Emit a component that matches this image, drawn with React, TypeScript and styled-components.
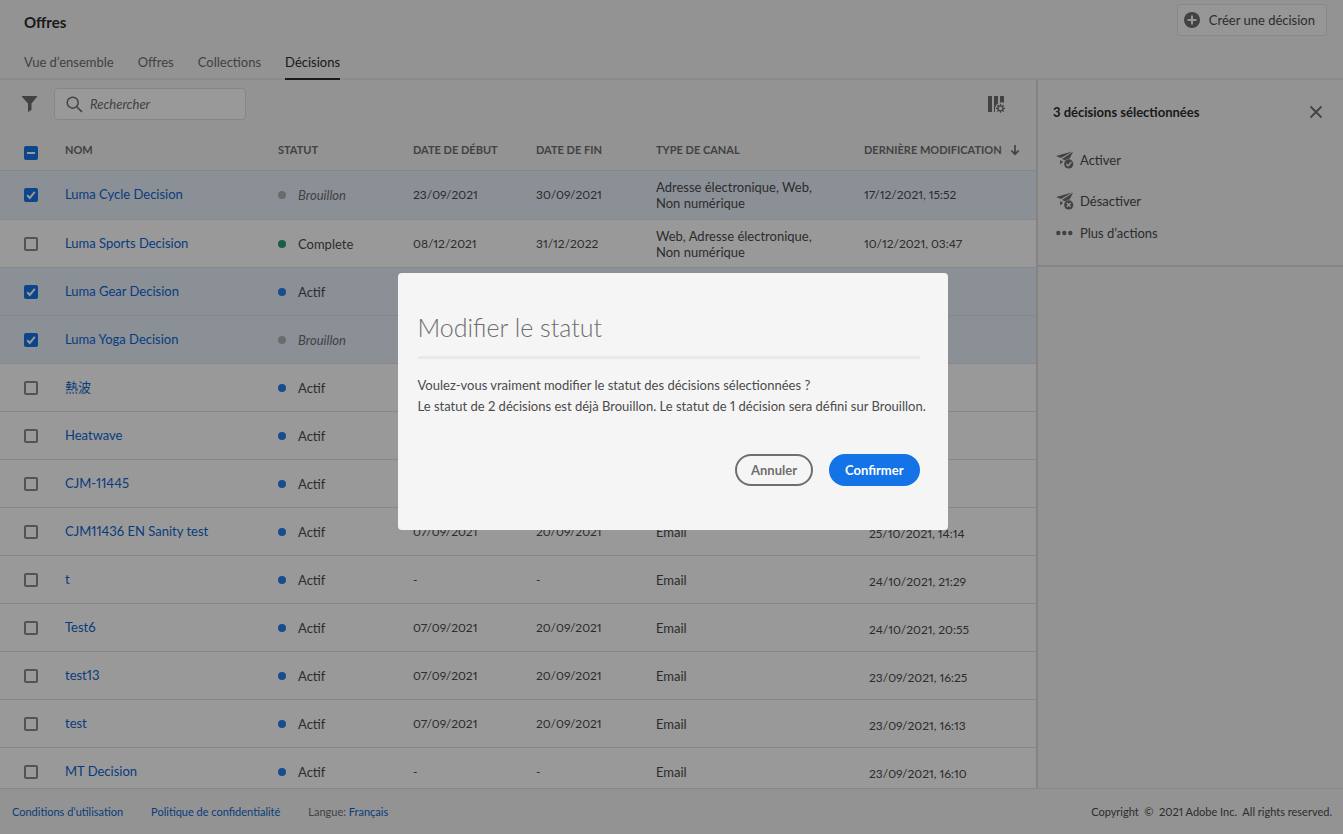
import React, { useEffect, useRef } from 'react';
import styled, { createGlobalStyle, css } from 'styled-components';

const GlobalStyle = createGlobalStyle`
  *, *::before, *::after { box-sizing: border-box; }
  body {
    margin: 0;
    font-family: Lato, 'Noto Sans CJK TC', sans-serif;
    font-size: 13px;
    font-variant-numeric: proportional-nums;
    line-height: 16px;
    color: #4b4b4b;
    background: #f5f5f5;
  }
  button, input { font: inherit; color: inherit; }
`;

const Page = styled.div`
  display: flex;
  flex-direction: column;
  height: 100vh;
  overflow: hidden;
`;

const Header = styled.header`
  display: flex;
  justify-content: space-between;
  align-items: stretch;
  flex: none;
  height: 80px;
  padding: 4px 16px 0 24px;
  border-bottom: 2px solid #eaeaea;
`;

const HeaderLeft = styled.div`
  display: flex;
  flex-direction: column;
  justify-content: space-between;
`;

const PageTitle = styled.h1`
  margin: 0;
  padding-top: 10px;
  font-size: 15px;
  font-weight: 700;
  color: #2c2c2c;
`;

const Tabs = styled.nav`
  display: flex;
  gap: 24px;
  margin-bottom: -2px;
`;

const Tab = styled.a<{ $active?: boolean }>`
  height: 26px;
  text-decoration: none;
  color: ${(p) => (p.$active ? '#2c2c2c' : '#6e6e6e')};
  border-bottom: 2px solid ${(p) => (p.$active ? '#2c2c2c' : 'transparent')};
`;

const CreateButton = styled.button`
  display: flex;
  align-items: center;
  gap: 9px;
  height: 32px;
  padding: 0 11px 0 6px;
  border: 1px solid #e1e1e1;
  border-radius: 4px;
  background: #fafafa;
`;

const Body = styled.div`
  display: flex;
  flex: 1;
  min-height: 0;
`;

const Main = styled.main`
  flex: 1;
  min-width: 0;
  overflow: hidden;
`;

const Toolbar = styled.div`
  display: flex;
  align-items: center;
  justify-content: space-between;
  height: 48px;
  padding: 0 31px 0 21px;
`;

const ToolGroup = styled.div`
  display: flex;
  align-items: center;
  gap: 16px;
`;

const IconButton = styled.button`
  display: flex;
  padding: 0;
  border: 0;
  background: none;
`;

const SearchBox = styled.label`
  display: flex;
  align-items: center;
  gap: 7px;
  width: 192px;
  height: 32px;
  padding: 0 11px;
  border: 1px solid #e1e1e1;
  border-radius: 4px;
  background: #fff;
`;

const SearchInput = styled.input`
  min-width: 0;
  flex: 1;
  padding: 0;
  border: 0;
  outline: 0;
  background: none;
  &::placeholder {
    color: #6e6e6e;
    font-style: italic;
    opacity: 1;
  }
`;

const Table = styled.table`
  width: 100%;
  table-layout: fixed;
  border-collapse: separate;
  border-spacing: 0;
`;

const Col = styled.col<{ $w?: number }>`
  ${(p) => p.$w && css`width: ${p.$w}px;`}
`;

const HeadCell = styled.th`
  height: 43px;
  padding: 2px 0 0;
  border-bottom: 1px solid #e1e1e1;
  text-align: left;
  font-size: 11px;
  font-weight: 700;
  color: #6e6e6e;
  white-space: nowrap;
  &:first-child { padding: 8px 0 0 24px; }
`;

const SortLabel = styled.span`
  display: flex;
  align-items: center;
  gap: 8px;
`;

const Row = styled.tr<{ $selected?: boolean }>`
  background: ${(p) => (p.$selected ? '#e8f0fc' : '#fff')};
`;

const Cell = styled.td`
  height: 48px;
  padding: 0;
  border-bottom: 1px solid #e1e1e1;
  white-space: pre-line;
  &:first-child { padding-left: 24px; }
  tr:first-child > & { height: 49px; }
`;

const NameCell = styled(Cell)`
  padding-bottom: 2px;
`;

const DateCell = styled(Cell)<{ $inset?: boolean }>`
  padding: ${(p) => (p.$inset ? '4px 0 0 5px' : '0')};
  font-size: 12px;
`;

const CheckBox = styled.input`
  appearance: none;
  display: block;
  width: 14px;
  height: 14px;
  margin: 0;
  border: 2px solid #8a8a8a;
  border-radius: 2px;
  background: #fff;
  &:checked, &:indeterminate {
    border: 0;
    background: #1473e6 center / 14px 14px no-repeat;
  }
  &:checked {
    background-image: url("data:image/svg+xml,%3Csvg xmlns='http://www.w3.org/2000/svg' viewBox='0 0 14 14'%3E%3Cpath d='M3.2 7.2l2.6 2.7 5-6' fill='none' stroke='white' stroke-width='2'/%3E%3C/svg%3E");
  }
  &:indeterminate {
    background-image: url("data:image/svg+xml,%3Csvg xmlns='http://www.w3.org/2000/svg' viewBox='0 0 14 14'%3E%3Cpath d='M3 7h8' stroke='white' stroke-width='2'/%3E%3C/svg%3E");
  }
`;

const NameLink = styled.a`
  color: #0d66d0;
  text-decoration: none;
`;

const Status = styled.span<{ $draft?: boolean }>`
  display: flex;
  align-items: center;
  gap: 12px;
  ${(p) => p.$draft && css`font-style: italic; color: #6e6e6e;`}
`;

const Dot = styled.span<{ $color: string }>`
  width: 8px;
  height: 8px;
  border-radius: 50%;
  background: ${(p) => p.$color};
`;

const Side = styled.aside`
  flex: none;
  width: 307px;
  border-left: 2px solid #dcdcdc;
`;

const SidePanel = styled.section`
  padding: 24px 20px 20px 15px;
  border-bottom: 2px solid #dcdcdc;
`;

const SideHead = styled.div`
  display: flex;
  align-items: center;
  justify-content: space-between;
`;

const SideTitle = styled.h2`
  margin: 0;
  font-size: 13px;
  font-weight: 700;
  color: #2c2c2c;
`;

const ActionList = styled.div`
  display: flex;
  flex-direction: column;
  align-items: flex-start;
  padding: 19px 0 0 3px;
`;

const Action = styled.button<{ $tall?: boolean }>`
  display: flex;
  align-items: center;
  gap: 6px;
  height: ${(p) => (p.$tall ? 41 : 24)}px;
  padding: 0;
  border: 0;
  background: none;
`;

const Footer = styled.footer`
  display: flex;
  align-items: center;
  flex: none;
  gap: 28px;
  height: 46px;
  padding: 0 11px 0 12px;
  border-top: 1px solid #e1e1e1;
  background: #f5f5f5;
  font-size: 11px;
  color: #6e6e6e;
`;

const FooterLink = styled.a`
  color: #0d66d0;
  text-decoration: none;
`;

const Copyright = styled.span`
  margin-left: auto;
  white-space: pre;
  color: #4b4b4b;
`;

const Backdrop = styled.div`
  position: fixed;
  inset: 0;
  display: flex;
  align-items: center;
  justify-content: center;
  padding: 0 0 32px 2px;
  background: rgba(0, 0, 0, 0.4);
`;

const Dialog = styled.div`
  width: 550px;
  padding: 37px 28px 44px 20px;
  border-radius: 4px;
  background: #f5f5f5;
`;

const DialogTitle = styled.h2`
  margin: 0 0 16px;
  padding-bottom: 12px;
  border-bottom: 3px solid #eaeaea;
  font-size: 25px;
  font-weight: 300;
  line-height: 34px;
  color: #6e6e6e;
`;

const DialogText = styled.p`
  margin: 0;
  line-height: 21px;
  white-space: nowrap;
`;

const DialogActions = styled.div`
  display: flex;
  justify-content: flex-end;
  gap: 16px;
  padding-top: 37px;
`;

const PillButton = styled.button<{ $primary?: boolean }>`
  height: 32px;
  padding: 0 14px;
  border: 2px solid ${(p) => (p.$primary ? '#1473e6' : '#6e6e6e')};
  border-radius: 16px;
  background: ${(p) => (p.$primary ? '#1473e6' : 'transparent')};
  color: ${(p) => (p.$primary ? '#fff' : '#6e6e6e')};
  font-weight: 700;
`;

type StatusName = 'Brouillon' | 'Complete' | 'Actif';

interface Decision {
  name: string;
  status: StatusName;
  start: string;
  end: string;
  channel: string;
  modified: string;
  selected?: boolean;
}

const dotColors: Record<StatusName, string> = {
  Brouillon: '#b3b3b3',
  Complete: '#2d9d78',
  Actif: '#2680eb',
};

const decisions: Decision[] = [
  { name: 'Luma Cycle Decision', status: 'Brouillon', start: '23/09/2021', end: '30/09/2021', channel: 'Adresse électronique, Web,\nNon numérique', modified: '17/12/2021, 15:52', selected: true },
  { name: 'Luma Sports Decision', status: 'Complete', start: '08/12/2021', end: '31/12/2022', channel: 'Web, Adresse électronique,\nNon numérique', modified: '10/12/2021, 03:47' },
  { name: 'Luma Gear Decision', status: 'Actif', start: '', end: '', channel: '', modified: '', selected: true },
  { name: 'Luma Yoga Decision', status: 'Brouillon', start: '', end: '', channel: '', modified: '', selected: true },
  { name: '熱波', status: 'Actif', start: '', end: '', channel: '', modified: '' },
  { name: 'Heatwave', status: 'Actif', start: '', end: '', channel: '', modified: '' },
  { name: 'CJM-11445', status: 'Actif', start: '', end: '', channel: '', modified: '' },
  { name: 'CJM11436 EN Sanity test', status: 'Actif', start: '07/09/2021', end: '20/09/2021', channel: 'Email', modified: '25/10/2021, 14:14' },
  { name: 't', status: 'Actif', start: '-', end: '-', channel: 'Email', modified: '24/10/2021, 21:29' },
  { name: 'Test6', status: 'Actif', start: '07/09/2021', end: '20/09/2021', channel: 'Email', modified: '24/10/2021, 20:55' },
  { name: 'test13', status: 'Actif', start: '07/09/2021', end: '20/09/2021', channel: 'Email', modified: '23/09/2021, 16:25' },
  { name: 'test', status: 'Actif', start: '07/09/2021', end: '20/09/2021', channel: 'Email', modified: '23/09/2021, 16:13' },
  { name: 'MT Decision', status: 'Actif', start: '-', end: '-', channel: 'Email', modified: '23/09/2021, 16:10' },
];

const PlusIcon = () => (
  <svg width="16" height="16" viewBox="0 0 16 16">
    <circle cx="8" cy="8" r="8" fill="#6e6e6e" />
    <path d="M8 3.5v9M3.5 8h9" stroke="#fafafa" strokeWidth="2" />
  </svg>
);

const FilterIcon = () => (
  <svg width="17" height="18" viewBox="0 0 17 18">
    <path d="M1.2 1h14.6c.4 0 .5.4.3.7L10.5 8.500v6.200L7 17.300V8.500L.9 1.700C.7 1.400.8 1 1.200 1z" fill="#6e6e6e" />
  </svg>
);

const SearchIcon = () => (
  <svg width="17" height="17" viewBox="0 0 17 17" fill="none" stroke="#6e6e6e" strokeWidth="1.500">
    <circle cx="6.700" cy="6.700" r="5.500" />
    <path d="M10.700 10.700l5.200 5.200" />
  </svg>
);

const ColumnsIcon = () => (
  <svg width="18" height="18" viewBox="0 0 18 18" fill="#6e6e6e">
    <path d="M1 1h4v16H1zM7 1h4v7.300a6 6 0 0 0-3 5V17H7zM13 1h4v6.800a6 6 0 0 0-4-.3z" />
    <circle cx="13.500" cy="13.300" r="2.500" fill="none" stroke="#6e6e6e" strokeWidth="1.300" />
    <path
      d="M13.500 8.800v2M13.500 15.800v2M9 13.300h2M16 13.300h2M10.300 10.100l1.400 1.400M15.300 15.100l1.400 1.400M10.300 16.500l1.400-1.400M15.300 11.500l1.400-1.400"
      stroke="#6e6e6e"
      strokeWidth="1.300"
    />
  </svg>
);

const ArrowDownIcon = () => (
  <svg width="10" height="12" viewBox="0 0 10 12" fill="none" stroke="#6e6e6e" strokeWidth="1.700">
    <path d="M5 1v9M1.300 6.500L5 10.200l3.700-3.700" />
  </svg>
);

const CloseIcon = () => (
  <svg width="14" height="14" viewBox="0 0 14 14" stroke="#6e6e6e" strokeWidth="1.800">
    <path d="M1.500 1.500l11 11M12.500 1.500l-11 11" />
  </svg>
);

const PlaneIcon = ({ off }: { off?: boolean }) => (
  <svg width="18" height="18" viewBox="0 0 18 18" fill="#6e6e6e">
    <path d="M0 5L16.200.4 5 7.100z" />
    <path d="M17 .8L6 8l3.300 1.500a5.600 5.600 0 0 1 4.400-2.100z" />
    <path d="M4.200 9v4.600l2.900-2.900z" />
    <circle cx="12.700" cy="12.900" r="4.600" />
    {off ? (
      <path d="M10.800 11l3.800 3.800M14.600 11l-3.800 3.800" stroke="#f5f5f5" strokeWidth="1.500" />
    ) : (
      <path d="M10.200 13.100l1.900 1.900 3.200-4" fill="none" stroke="#f5f5f5" strokeWidth="1.400" />
    )}
  </svg>
);

const MoreIcon = () => (
  <svg width="18" height="18" viewBox="0 0 18 18" fill="#6e6e6e">
    <circle cx="2.300" cy="9" r="2.200" />
    <circle cx="8.300" cy="9" r="2.200" />
    <circle cx="14.300" cy="9" r="2.200" />
  </svg>
);

const SelectAll = () => {
  const ref = useRef<HTMLInputElement>(null);
  useEffect(() => {
    if (ref.current) ref.current.indeterminate = true;
  }, []);
  return <CheckBox ref={ref} type="checkbox" aria-label="Tout sélectionner" />;
};

export default function App() {
  return (
    <>
      <GlobalStyle />
      <Page>
        <Header>
          <HeaderLeft>
            <PageTitle>Offres</PageTitle>
            <Tabs>
              <Tab href="#ensemble">Vue d’ensemble</Tab>
              <Tab href="#offres">Offres</Tab>
              <Tab href="#collections">Collections</Tab>
              <Tab href="#decisions" $active>Décisions</Tab>
            </Tabs>
          </HeaderLeft>
          <CreateButton type="button"><PlusIcon />Créer une décision</CreateButton>
        </Header>
        <Body>
          <Main>
            <Toolbar>
              <ToolGroup>
                <IconButton type="button" aria-label="Filtrer"><FilterIcon /></IconButton>
                <SearchBox>
                  <SearchIcon />
                  <SearchInput type="search" placeholder="Rechercher" aria-label="Rechercher" />
                </SearchBox>
              </ToolGroup>
              <IconButton type="button" aria-label="Configurer les colonnes"><ColumnsIcon /></IconButton>
            </Toolbar>
            <Table>
              <colgroup>
                <Col $w={65} />
                <Col $w={213} />
                <Col $w={135} />
                <Col $w={123} />
                <Col $w={120} />
                <Col $w={208} />
                <Col />
              </colgroup>
              <thead>
                <tr>
                  <HeadCell><SelectAll /></HeadCell>
                  <HeadCell>NOM</HeadCell>
                  <HeadCell>STATUT</HeadCell>
                  <HeadCell>DATE DE DÉBUT</HeadCell>
                  <HeadCell>DATE DE FIN</HeadCell>
                  <HeadCell>TYPE DE CANAL</HeadCell>
                  <HeadCell><SortLabel>DERNIÈRE MODIFICATION<ArrowDownIcon /></SortLabel></HeadCell>
                </tr>
              </thead>
              <tbody>
                {decisions.map((d, i) => (
                  <Row key={d.name} $selected={d.selected}>
                    <Cell><CheckBox type="checkbox" defaultChecked={d.selected} aria-label={d.name} /></Cell>
                    <NameCell><NameLink href="#decision">{d.name}</NameLink></NameCell>
                    <Cell>
                      <Status $draft={d.status === 'Brouillon'}><Dot $color={dotColors[d.status]} />{d.status}</Status>
                    </Cell>
                    <DateCell>{d.start}</DateCell>
                    <DateCell>{d.end}</DateCell>
                    <Cell>{d.channel}</Cell>
                    <DateCell $inset={i > 1}>{d.modified}</DateCell>
                  </Row>
                ))}
              </tbody>
            </Table>
          </Main>
          <Side>
            <SidePanel>
              <SideHead>
                <SideTitle>3 décisions sélectionnées</SideTitle>
                <IconButton type="button" aria-label="Fermer"><CloseIcon /></IconButton>
              </SideHead>
              <ActionList>
                <Action type="button" $tall><PlaneIcon />Activer</Action>
                <Action type="button" $tall><PlaneIcon off />Désactiver</Action>
                <Action type="button"><MoreIcon />Plus d’actions</Action>
              </ActionList>
            </SidePanel>
          </Side>
        </Body>
        <Footer>
          <FooterLink href="#conditions">Conditions d’utilisation</FooterLink>
          <FooterLink href="#confidentialite">Politique de confidentialité</FooterLink>
          <span>Langue: <FooterLink href="#langue">Français</FooterLink></span>
          <Copyright>Copyright  ©  2021 Adobe Inc.  All rights reserved.</Copyright>
        </Footer>
      </Page>
      <Backdrop>
        <Dialog role="dialog" aria-modal="true" aria-labelledby="dialog-title">
          <DialogTitle id="dialog-title">Modifier le statut</DialogTitle>
          <DialogText>Voulez-vous vraiment modifier le statut des décisions sélectionnées ?</DialogText>
          <DialogText>Le statut de 2 décisions est déjà Brouillon. Le statut de 1 décision sera défini sur Brouillon.</DialogText>
          <DialogActions>
            <PillButton type="button">Annuler</PillButton>
            <PillButton type="button" $primary>Confirmer</PillButton>
          </DialogActions>
        </Dialog>
      </Backdrop>
    </>
  );
}
